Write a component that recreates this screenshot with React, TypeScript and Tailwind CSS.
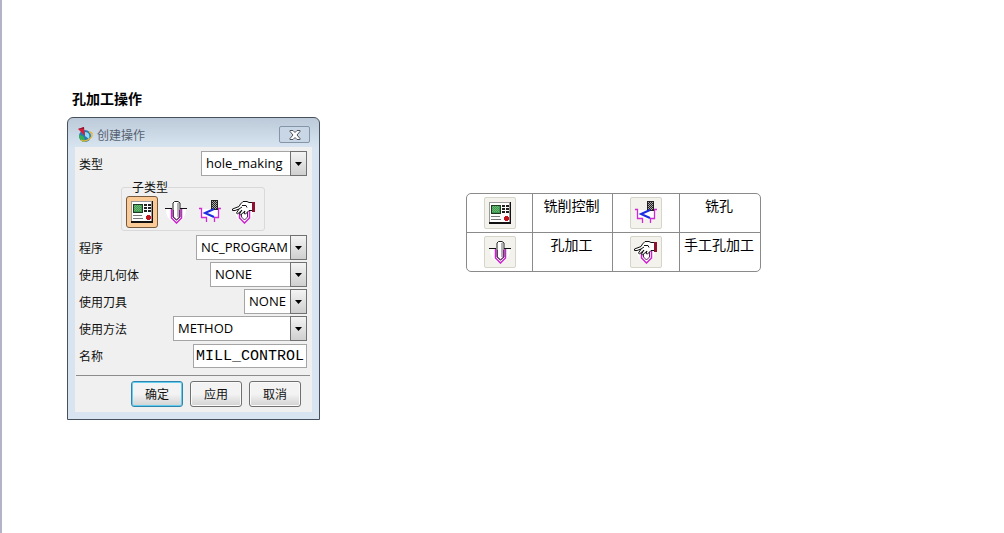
import type { ReactNode } from 'react';

function ControlIcon() {
  return (
    <svg width="24" height="24" viewBox="0 0 24 24" shapeRendering="crispEdges" aria-hidden="true">
      <path d="M1 1h22v22H1z" fill="#111" />
      <path d="M1 1h21v20H1z" fill="#999" />
      <path d="M2 2h19v19H2z" fill="#fff" />
      <path d="M3 4h10v9H3z" fill="#1d3a24" />
      <path d="M4 5h8v7H4z" fill="#3f9a50" />
      <path d="M5 5.500h1m1 0h1m1 0h1M4 6.500h1m1 0h1m1 0h1m1 0h1M5 7.500h1m1 0h1m1 0h1M4 8.500h1m1 0h1m1 0h1m1 0h1M5 9.500h1m1 0h1m1 0h1M4 10.500h1m1 0h1m1 0h1m1 0h1" stroke="#6fba78" />
      <path d="M14 4h3v2h-3zM18 4h3v2h-3zM14 7h3v2h-3zM18 7h3v2h-3zM14 10h3v2h-3zM18 10h3v2h-3z" fill="#222" />
      <path d="M3 15h9v1H3zM3 18h10v1H3z" fill="#777" />
      <path d="M17 15h3v1h1v3h-1v1h-3v-1h-1v-3h1z" fill="#c4121f" />
    </svg>
  );
}

function DrillIcon() {
  return (
    <svg width="24" height="24" viewBox="0 0 24 24" aria-hidden="true">
      <path d="M2 9h20c0 7-4 13-10 13S2 17 2 9z" fill="#fff" />
      <path d="M1 8.500h7M16 8.500h7" stroke="#111" fill="none" />
      <path d="M7.500 9v9l5 5 5-5V9" stroke="#cc22d0" strokeWidth="1.500" fill="none" />
      <path d="M9 17V3l1.500-1.500H14L16 3v14l-3.500 3z" fill="#fff" stroke="#222" />
      <path d="M14 3v14" stroke="#9a9a9a" strokeWidth="1.500" />
      <path d="M9.500 10v7l3 3 3-3v-7" fill="none" stroke="#7a2580" />
    </svg>
  );
}

function MillIcon() {
  return (
    <svg width="24" height="24" viewBox="0 0 24 24" aria-hidden="true">
      <path d="M4 9h16v9H4z" fill="#fff" />
      <path d="M1 8.500h2.500v9h5V22M23 8.500h-2.500v9h-4V22" stroke="#cf28d4" strokeWidth="1.300" fill="none" />
      <path d="M13 0h7v10h-7z" fill="#222" shapeRendering="crispEdges" />
      <path d="M14 1.500h1m1 0h1m1 0h1M15 2.500h1m1 0h1M14 3.500h1m1 0h1m1 0h1M15 4.500h1m1 0h1M14 5.500h1m1 0h1m1 0h1M15 6.500h1m1 0h1M14 7.500h1m1 0h1m1 0h1M15 8.500h1m1 0h1" stroke="#aaa" shapeRendering="crispEdges" />
      <path d="M16 9L7 13l9 4" stroke="#1c2ce0" strokeWidth="2" fill="none" />
    </svg>
  );
}

function HandIcon() {
  return (
    <svg width="24" height="24" viewBox="0 0 24 24" aria-hidden="true">
      <path d="M3 10h18c0 7-4 12-9 12S3 17 3 10z" fill="#fff" />
      <path d="M7.500 10v8l5 5 5-5v-8" stroke="#cc22d0" strokeWidth="1.500" fill="none" />
      <path d="M9.500 12v5l3 3 3-3v-6" fill="#fff" stroke="#5c2060" />
      <path d="M21 2.500h-4l-2-1h-4L8.500 4 7 6.500 0.500 9v1.500H3l4-1.500-2.500 4 1 1L10 10l-2.500 4 1 1 4.500-4-1 2.500 1.500.500L17 10.500h4z" fill="#fff" stroke="#111" />
      <path d="M10 5.500h4l1 2M7 9l3-2" fill="none" stroke="#111" />
      <path d="M20 2h3v10h-3z" fill="#8c1230" />
    </svg>
  );
}

function AppLogo() {
  return (
    <svg width="18" height="18" viewBox="0 0 18 18" aria-hidden="true">
      <circle cx="9" cy="10" r="6" fill="#2478b8" />
      <path d="M3 9c4 0 6 2 6 7-4 0-6-3-6-7z" fill="#35b052" />
      <path d="M9 6c4 0 5 3 4 7L9 10z" fill="#8ddcf2" />
      <path d="M5 14c4 3 12-2 11-6 0-1-1-2-3-2" fill="none" stroke="#e9b63a" strokeWidth="1.400" />
      <path d="M2 3l6-2 1 9z" fill="#d31f3b" />
      <path d="M2 3l6-2v2z" fill="#8e1830" />
    </svg>
  );
}

const subtypes = [
  { name: '铣削控制', icon: <ControlIcon /> },
  { name: '孔加工', icon: <DrillIcon /> },
  { name: '铣孔', icon: <MillIcon /> },
  { name: '手工孔加工', icon: <HandIcon /> },
];

type SelectRowProps = { id: string; label: string; value: string; width: string };

function SelectRow({ id, label, value, width }: SelectRowProps) {
  return (
    <div className="flex h-[25px] items-center justify-between">
      <label htmlFor={id}>{label}</label>
      <div className={`relative h-full ${width}`}>
        <select
          id={id}
          className="h-full w-full appearance-none border border-[#a5a5a5] bg-white pl-1 font-['Open_Sans',sans-serif] text-[13px] text-black"
        >
          <option>{value}</option>
        </select>
        <span className="pointer-events-none absolute inset-y-0 right-0 flex w-[17px] items-center justify-center border border-[#707070] bg-linear-to-b from-[#f4f4f4] to-[#cfcfcf]">
          <svg width="7" height="4" viewBox="0 0 7 4" aria-hidden="true">
            <path d="M0 0h7L3.500 4z" fill="#000" />
          </svg>
        </span>
      </div>
    </div>
  );
}

function DialogButton({ children, primary }: { children: ReactNode; primary?: boolean }) {
  return (
    <button
      type="button"
      className={`h-[26px] w-[52px] rounded-[3px] border bg-linear-to-b from-[#f3f3f3] from-50% to-[#d2d2d2] ${
        primary ? 'border-[#2f86ad] inset-ring inset-ring-[#62cdf0]' : 'border-[#707070] inset-ring inset-ring-[#fafafa]'
      }`}
    >
      {children}
    </button>
  );
}

function OperationDialog() {
  return (
    <section
      aria-label="创建操作"
      className="w-[253px] rounded-t-md border border-[#46515d] bg-linear-to-b from-[#bccad9] to-[#d8e5f1] to-10% px-[7px] pb-[7px] text-xs text-[#111]"
    >
      {/* Title bar */}
      <header className="flex h-[29px] items-center pt-1 pr-0.5 pl-px">
        <AppLogo />
        <h2 className="ml-[3px] text-[#566270]">创建操作</h2>
        <button
          type="button"
          aria-label="关闭"
          className="ml-auto flex h-[17px] w-[31px] items-center justify-center rounded-[2px] border border-[#8495a8] bg-[#c8d6e5]"
        >
          <svg width="12" height="10" viewBox="0 0 12 10" aria-hidden="true">
            <path d="M1 .5h3l2 2 2-2h3v1L8 5l3 3.500v1H8l-2-2-2 2H1v-1L4 5 1 1.500z" fill="#fff" stroke="#4c535c" />
          </svg>
        </button>
      </header>

      <form className="bg-[#f0f0f0] pt-1 pb-[5px]">
        <div className="flex flex-col gap-0.5 pr-[5px] pl-1">
          <SelectRow id="type" label="类型" value="hole_making" width="w-[106px]" />

          <fieldset className="mx-auto my-0.5 rounded-[3px] border border-[#d9d9d9] px-1 pt-0.5 pb-0.5">
            <legend className="ml-1.5 text-xs leading-[14px]">子类型</legend>
            <div className="flex gap-0.5">
              {subtypes.map((item, i) => (
                <button
                  key={item.name}
                  type="button"
                  aria-label={item.name}
                  className={`flex size-8 items-center justify-center rounded-[3px] ${
                    i === 0 ? 'border border-[#74593c] bg-[#fbcb97]' : ''
                  }`}
                >
                  {item.icon}
                </button>
              ))}
            </div>
          </fieldset>

          <SelectRow id="program" label="程序" value="NC_PROGRAM" width="w-[111px]" />
          <SelectRow id="geometry" label="使用几何体" value="NONE" width="w-[97px]" />
          <SelectRow id="tool" label="使用刀具" value="NONE" width="w-[63px]" />
          <SelectRow id="method" label="使用方法" value="METHOD" width="w-[134px]" />

          <div className="flex h-[25px] items-center justify-between">
            <label htmlFor="name">名称</label>
            <input
              id="name"
              defaultValue="MILL_CONTROL"
              className="h-6 w-[114px] border border-[#a5a5a5] bg-white px-0.5 pt-0.5 font-['Liberation_Mono',monospace] text-[15px] text-black"
            />
          </div>
        </div>

        <div className="mr-0.5 ml-px mt-[7px] flex justify-end gap-[7px] border-t border-[#8c8c8c] pt-[5px] pr-[9px]">
          <DialogButton primary>确定</DialogButton>
          <DialogButton>应用</DialogButton>
          <DialogButton>取消</DialogButton>
        </div>
      </form>
    </section>
  );
}

function IconCell({ children }: { children: ReactNode }) {
  return (
    <td className="w-[67px] border-r border-[#8a8a8a] p-0 pt-[3px] align-top first:w-[66px]">
      <span className="mx-auto flex size-8 items-center justify-center rounded-[2px] border border-[#d6d5ca] bg-[#f3f2ec]">
        {children}
      </span>
    </td>
  );
}

function LegendTable() {
  const [control, drill, mill, hand] = subtypes;
  const rows = [
    [control, mill],
    [drill, hand],
  ];

  return (
    <table className="border-separate border-spacing-0 rounded-[5px] border border-[#8a8a8a] text-sm text-black">
      <tbody>
        {rows.map(([left, right], i) => (
          <tr key={left.name} className={i === 0 ? 'h-[39px] *:border-b' : 'h-[38px]'}>
            <IconCell>{left.icon}</IconCell>
            <td className="w-20 border-r border-[#8a8a8a] p-0 pt-px pr-0.5 text-center align-top">{left.name}</td>
            <IconCell>{right.icon}</IconCell>
            <td className="w-20 border-[#8a8a8a] p-0 pt-px pr-0.5 text-center align-top">{right.name}</td>
          </tr>
        ))}
      </tbody>
    </table>
  );
}

export default function App() {
  return (
    <main className="min-h-screen border-l-2 border-[#b3b3c6] bg-white px-[65px] pt-[88px] font-['Noto_Sans_CJK_SC',sans-serif]">
      <h1 className="ml-[5px] text-sm font-bold text-black">孔加工操作</h1>
      <div className="mt-[9px] flex flex-wrap items-start gap-x-[146px] gap-y-8">
        <OperationDialog />
        <div className="pt-[76px]">
          <LegendTable />
        </div>
      </div>
    </main>
  );
}
